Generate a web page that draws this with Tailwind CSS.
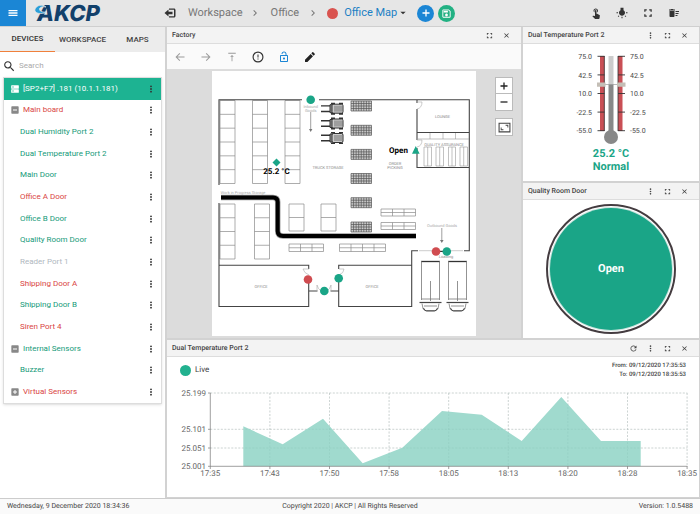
<!DOCTYPE html>
<html lang="en">
<head>
    <meta charset="utf-8" />
    <title>AKCP - Office Map</title>
    <meta name="viewport" content="width=device-width, initial-scale=1.0">
    <script src="https://cdn.jsdelivr.net/npm/@tailwindcss/browser@4"></script>
</head>
<body class="flex h-screen flex-col overflow-hidden bg-white font-['Roboto',sans-serif] text-[8px] text-[#444] [text-rendering:geometricPrecision]">
    <!-- icon sprite -->
    <svg class="hidden" xmlns="http://www.w3.org/2000/svg">
        <symbol id="i-menu" viewBox="0 0 24 24"><path d="M3 18h18v-2.500H3zm0-4.700h18v-2.600H3zM3 6v2.500h18V6z"/></symbol>
        <symbol id="i-exit" viewBox="0 0 24 24"><path d="M10 3h10c1.700 0 3 1.300 3 3v12c0 1.700-1.300 3-3 3H10v-2.500h10V5.500H10z"/><path d="M1 12l8-7v4.500h8v5H9V19z"/></symbol>
        <symbol id="i-chevron" viewBox="0 0 24 24"><path d="M8.600 16.600L13.200 12 8.600 7.400 10 6l6 6-6 6z"/></symbol>
        <symbol id="i-caret" viewBox="0 0 24 24"><path d="M4 8l8 8 8-8z"/></symbol>
        <symbol id="i-plus" viewBox="0 0 24 24"><path d="M19 13.300h-5.700V19h-2.600v-5.700H5v-2.600h5.700V5h2.600v5.700H19z"/></symbol>
        <symbol id="i-minus" viewBox="0 0 24 24"><path d="M5 10.700h14v2.600H5z"/></symbol>
        <symbol id="i-save" viewBox="0 0 24 24"><path d="M17 3H5c-1.110 0-2 .9-2 2v14c0 1.100.89 2 2 2h14c1.100 0 2-.9 2-2V7l-4-4zm2 16H5V5h11.200L19 7.800zM12 12c-1.660 0-3 1.340-3 3s1.340 3 3 3 3-1.340 3-3-1.340-3-3-3zM6 6h9v4H6z"/></symbol>
        <symbol id="i-touch" viewBox="0 0 24 24"><path d="M9 11.240V7.500C9 6.120 10.120 5 11.500 5S14 6.120 14 7.500v3.740c1.210-.81 2-2.180 2-3.740C16 5.010 13.990 3 11.500 3S7 5.010 7 7.500c0 1.560.79 2.930 2 3.740zm9.840 4.630l-4.540-2.260c-.17-.07-.35-.11-.54-.11H13v-6c0-.83-.67-1.500-1.500-1.500S10 6.670 10 7.500v10.740l-3.430-.72c-.08-.01-.15-.03-.24-.03-.31 0-.59.13-.79.33l-.79.8 4.940 4.940c.27.27.65.44 1.060.44h6.790c.75 0 1.330-.55 1.440-1.280l.75-5.270c.01-.07.02-.14.02-.2 0-.62-.38-1.160-.91-1.380z"/></symbol>
        <symbol id="i-light" viewBox="0 0 24 24"><path d="M3.550 18.540l1.410 1.410 1.800-1.790-1.410-1.410-1.800 1.790zM11 22.450h2V19.500h-2v2.950zM4 10.500H1v2h3v-2zm11-4.190V1.500H9v4.810C7.210 7.350 6 9.280 6 11.500c0 3.310 2.690 6 6 6s6-2.690 6-6c0-2.220-1.210-4.150-3-5.190zm5 4.190v2h3v-2h-3zm-2.760 7.660l1.790 1.800 1.410-1.410-1.800-1.790-1.400 1.400z"/></symbol>
        <symbol id="i-full" viewBox="0 0 24 24"><path d="M6 15H3v6h6v-3H6zM3 9h3V6h3V3H3zm15 9h-3v3h6v-6h-3zM15 3v3h3v3h3V3z"/></symbol>
        <symbol id="i-sweep" viewBox="0 0 24 24"><path d="M15 16h4v2h-4zm0-8h7v2h-7zm0 4h6v2h-6zM3 18c0 1.100.9 2 2 2h6c1.100 0 2-.9 2-2V8H3v10zM14 5h-3l-1-1H6L5 5H2v2h12z"/></symbol>
        <symbol id="i-close" viewBox="0 0 24 24"><path d="M20 5.800L18.200 4 12 10.200 5.800 4 4 5.800l6.200 6.200L4 18.200 5.800 20l6.200-6.200 6.200 6.200 1.800-1.800-6.200-6.200z"/></symbol>
        <symbol id="i-dots" viewBox="0 0 24 24"><circle cx="12" cy="4" r="2.800"/><circle cx="12" cy="12" r="2.800"/><circle cx="12" cy="20" r="2.800"/></symbol>
        <symbol id="i-refresh" viewBox="0 0 24 24"><path d="M17.650 6.350C16.200 4.900 14.210 4 12 4c-4.420 0-7.990 3.580-7.990 8s3.570 8 7.990 8c3.730 0 6.840-2.550 7.730-6h-2.080c-.82 2.330-3.040 4-5.650 4-3.310 0-6-2.690-6-6s2.690-6 6-6c1.660 0 3.140.69 4.220 1.780L13 11h7V4l-2.350 2.350z"/></symbol>
        <symbol id="i-search" viewBox="1 1 21 21"><path d="M15.500 14h-.79l-.28-.27C15.410 12.590 16 11.110 16 9.500 16 5.910 13.090 3 9.500 3S3 5.910 3 9.500 5.910 16 9.500 16c1.610 0 3.090-.59 4.230-1.570l.27.28v.79l5 4.990L20.490 19l-4.990-5zm-6 0C7.010 14 5 11.990 5 9.500S7.010 5 9.500 5 14 7.010 14 9.500 11.990 14 9.500 14z"/></symbol>
        <symbol id="i-dns" viewBox="0 0 24 24"><path fill-rule="evenodd" d="M2 1h20a1.500 1.500 0 011.500 1.500v7A1.500 1.500 0 0122 11H2a1.500 1.500 0 01-1.500-1.500v-7A1.500 1.500 0 012 1zm2 3.500v3h4v-3zM2 13h20a1.500 1.500 0 011.500 1.500v7A1.500 1.500 0 0122 23H2a1.500 1.500 0 01-1.500-1.500v-7A1.500 1.500 0 012 13zm2 3.500v3h4v-3z"/></symbol>
        <symbol id="i-collapse" viewBox="0 0 24 24"><path fill-rule="evenodd" d="M3 1h18a2 2 0 012 2v18a2 2 0 01-2 2H3a2 2 0 01-2-2V3a2 2 0 012-2zm3 9.500v3h12v-3z"/></symbol>
        <symbol id="i-expand" viewBox="0 0 24 24"><path fill-rule="evenodd" d="M3 1h18a2 2 0 012 2v18a2 2 0 01-2 2H3a2 2 0 01-2-2V3a2 2 0 012-2zm7.500 5v4.500H6v3h4.500V18h3v-4.500H18v-3h-4.500V6z"/></symbol>
        <symbol id="i-back" viewBox="0 0 24 24"><path d="M21 11H6.800l5.600-5.600L11 4l-8 8 8 8 1.400-1.400L6.800 13H21z"/></symbol>
        <symbol id="i-forward" viewBox="0 0 24 24"><path d="M3 11h14.200l-5.600-5.600L13 4l8 8-8 8-1.400-1.400 5.600-5.600H3z"/></symbol>
        <symbol id="i-top" viewBox="0 0 24 24"><path d="M7.500 11.500H11V22h2V11.500h3.500L12 7zM3 2v2h18V2z"/></symbol>
        <symbol id="i-alert" viewBox="0 0 24 24"><path d="M11 15h2v2.200h-2zm0-8.200h2V13h-2zM12 1a11 11 0 100 22 11 11 0 000-22zm0 19.700a8.700 8.700 0 110-17.400 8.700 8.700 0 010 17.400z"/></symbol>
        <symbol id="i-lock" viewBox="0 0 24 24"><path d="M12 17c1.100 0 2-.9 2-2s-.9-2-2-2-2 .9-2 2 .9 2 2 2zm6-9h-1V6c0-2.760-2.240-5-5-5S7 3.240 7 6h1.900c0-1.710 1.390-3.100 3.100-3.100 1.710 0 3.100 1.390 3.100 3.100v2H6c-1.100 0-2 .9-2 2v10c0 1.100.9 2 2 2h12c1.100 0 2-.9 2-2V10c0-1.100-.9-2-2-2zm0 12H6V10h12v10z"/></symbol>
        <symbol id="i-edit" viewBox="0 0 24 24"><path d="M2 17.250V22h4.750L18 10.700 13.300 6 2 17.250zM21.500 7.200c.5-.5.5-1.200 0-1.700l-3-3c-.5-.5-1.200-.5-1.700 0l-2.200 2.200 4.700 4.700z"/></symbol>
        <symbol id="i-fit" viewBox="0 0 24 24"><path fill-rule="evenodd" d="M1 3h22v18H1zm2 2v14h18V5zM14 7h5v5h-1.600V8.600H14zM5 12h1.600v3.400H10V17H5z"/></symbol>
    </svg>

    <header class="flex h-[27px] shrink-0 items-center border-b border-[#cfcfcf] bg-[#e6e6e6]">
        <button aria-label="Menu" class="flex h-full w-[26px] items-center justify-center bg-[#1b86d5] text-white"><svg class="size-3 fill-current"><use href="#i-menu"/></svg></button>
        <svg class="ml-2 h-6 w-20" viewBox="0 0 80 24" aria-label="AKCP">
            <text x="3" y="20" class="fill-[#12406b] font-['Inter',sans-serif] text-[22px] font-extrabold italic">AKCP</text>
            <path d="M1 8C3 4 8 3 12 6c-3-.500-5-.500-6.500 1.500C5 10 8 11.500 13 11 7 14 0 12.500 1 8z" fill="#2b9fd8" stroke="#e6e6e6" stroke-width=".7"/>
        </svg>
        <nav class="ml-[50px] flex flex-1 items-center text-[11px] text-[#777]">
            <button aria-label="Exit" class="mr-3 text-[#333]"><svg class="size-3 fill-current"><use href="#i-exit"/></svg></button>
            <a href="#">Workspace</a>
            <svg class="mx-1.5 size-3 fill-current"><use href="#i-chevron"/></svg>
            <a href="#" class="ml-1">Office</a>
            <svg class="mx-2 size-3 fill-current"><use href="#i-chevron"/></svg>
            <span class="mr-1.5 size-[11px] rounded-full bg-[#d9534f]"></span>
            <button class="flex items-center gap-0.5 text-[#1b80c4]">Office Map <svg class="size-2 fill-[#333]"><use href="#i-caret"/></svg></button>
            <button aria-label="Add" class="ml-2.5 flex size-[17px] items-center justify-center rounded-full bg-[#1b86d5] text-white"><svg class="size-3 fill-current"><use href="#i-plus"/></svg></button>
            <button aria-label="Save" class="ml-1 flex size-[17px] items-center justify-center rounded-full bg-[#22b183] text-white"><svg class="size-[11px] fill-current"><use href="#i-save"/></svg></button>
        </nav>
        <div class="flex gap-3.5 pr-5 text-[#333]">
            <button aria-label="Touch"><svg class="size-3 fill-current"><use href="#i-touch"/></svg></button>
            <button aria-label="Light"><svg class="size-3 fill-current"><use href="#i-light"/></svg></button>
            <button aria-label="Fullscreen"><svg class="size-3 fill-current p-px"><use href="#i-full"/></svg></button>
            <button aria-label="Clear"><svg class="size-3 fill-current"><use href="#i-sweep"/></svg></button>
        </div>
    </header>

    <div class="flex min-h-0 flex-1">
        <aside class="w-[165px] shrink-0">
            <div class="grid h-[25px] grid-cols-3 bg-[#ececec] font-medium">
                <button class="border-b border-[#f0803c] text-[#333]">DEVICES</button>
                <button class="text-[#444]">WORKSPACE</button>
                <button class="text-[#444]">MAPS</button>
            </div>
            <label class="flex h-[25px] items-center gap-1 px-[3px] pt-0.5">
                <svg class="size-3 shrink-0 fill-[#333]"><use href="#i-search"/></svg>
                <input type="text" aria-label="Search" placeholder="Search" class="w-full outline-none placeholder:text-[#aaa]">
            </label>
            <ul id="tree" class="mx-[3px] grid h-[327px] auto-rows-fr border border-[#ddd] shadow-sm"></ul>
        </aside>

        <main class="grid min-w-0 flex-1 grid-cols-[354fr_176fr] grid-rows-[311fr_157fr] gap-0.5 bg-[#d2d2d2] pr-px pb-px pl-0.5">
            <section class="flex min-h-0 flex-col bg-white">
                <div data-tools="full close" class="flex h-[17px] shrink-0 items-center border-b border-[#ddd] bg-[#f3f3f3] pr-2.5 pl-[5px]"><h2 class="flex-1 text-[7px] font-medium">Factory</h2></div>
                <div class="flex h-[26px] shrink-0 items-center gap-3.5 border-b border-[#ddd] bg-[#fafafa] px-[7px] text-[#999]">
                    <button aria-label="Back"><svg class="size-3 fill-current"><use href="#i-back"/></svg></button>
                    <button aria-label="Forward"><svg class="size-3 fill-current"><use href="#i-forward"/></svg></button>
                    <button aria-label="Up"><svg class="size-3 fill-current p-px"><use href="#i-top"/></svg></button>
                    <button aria-label="Alerts" class="text-[#333]"><svg class="size-3 fill-current"><use href="#i-alert"/></svg></button>
                    <button aria-label="Lock" class="text-[#1b86d5]"><svg class="size-3 fill-current"><use href="#i-lock"/></svg></button>
                    <button aria-label="Edit" class="text-[#222]"><svg class="size-3 fill-current"><use href="#i-edit"/></svg></button>
                </div>
                <div class="relative flex min-h-0 flex-1 justify-center bg-[#dcdcdc] pt-px pb-0.5">
                    <svg id="plan" class="h-full bg-white" viewBox="212 71 264 265" fill="none">
                        <g id="shelves" stroke="#8a8a8a" stroke-width=".7"></g>
                        <g id="racks"></g>
                        <!-- conveyor -->
                        <path d="M221 197.500H273Q277.700 197.500 277.700 202V231Q277.700 236 283 236H416" stroke="#999" stroke-width="5.500"/>
                        <path d="M221 197.500H273Q277.700 197.500 277.700 202V231Q277.700 236 283 236H416" stroke="#000" stroke-width="4"/>
                        <!-- walls -->
                        <path stroke="#444" stroke-width="1.100" d="M302 99.700H219V185M219 203V306.500H308.700V281M219 265.300H308.700V269M319 99.700H469.300V250.700H464M417 100V103M417 109V140M417 132.500H469M417 148V167.500H469M308.700 291H317.500M330.500 291H338.700M338.700 281V306.500H411.700V250.700H418M338.700 269V265.300H411.700"/>
                        <path stroke="#aaa" stroke-width=".6" d="M417 102h5q0 6-5 7M417 140h5q0 6-5 7M309 269h-6q1 4 6 6M339 269h5q0 4-5 6M317 285q1 4 4 6M331 285q-1 4-4 6M317 291v-6M331 291v-6M419 250.700H463"/>
                        <!-- quality room benches -->
                        <path stroke="#999" stroke-width=".6" d="M417 139H469M430 133v6M443 133v6M455.500 133v6M424 147h7.500v19H424zM427.700 147v19M436 147h7.500v19H436zM439.700 147v19M448.500 147h7v19h-7zM452 147v19M460 147h7.500v19H460zM463.700 147v19"/>
                        <path stroke="#777" stroke-width=".7" d="M310.700 112V130M441.800 228V241"/>
                        <path fill="#777" d="M309 129h3.400l-1.700 3zM440 240h3.600l-1.800 3z"/>
                        <g id="forklifts" stroke="#333" stroke-width="1"></g>
                        <g id="trucks" stroke="#777" stroke-width=".8"></g>
                        <g class="fill-[#888] text-[4px]" text-anchor="middle">
                            <text x="442.500" y="118">LOUNGE</text>
                            <text x="444" y="145.500">QUALITY ASSURANCE</text>
                            <text x="395" y="165">ORDER</text>
                            <text x="395" y="169">PICKING</text>
                            <text x="328" y="168.500">TRUCK STORAGE</text>
                            <text x="261" y="287.500">OFFICE</text>
                            <text x="372" y="287.500">OFFICE</text>
                            <text x="446" y="258">Loading</text>
                        </g>
                        <g class="fill-[#aaa] text-[4px]" text-anchor="middle">
                            <text x="310.700" y="107.500">Inbound</text>
                            <text x="310.700" y="111.500">Goods</text>
                            <text x="243" y="193.500">Work in Progress Storage</text>
                            <text x="442" y="227">Outbound Goods</text>
                        </g>
                        <!-- sensors -->
                        <g fill="#1aa587">
                            <circle cx="310.700" cy="99.700" r="4.300"/><circle cx="324.300" cy="291" r="4.300"/><circle cx="338.700" cy="278.300" r="4.300"/>
                            <path d="M276.500 158.500l4 4-4 4-4-4zM415.800 146l3.800 7.800H412z"/>
                        </g>
                        <path stroke="#333" stroke-width="1" d="M436 251.500h11"/>
                        <circle cx="446.800" cy="251.500" r="4.300" fill="#1aa587"/>
                        <g fill="#d04c50"><circle cx="308" cy="279.500" r="4.300"/><circle cx="436" cy="251.500" r="4.300"/></g>
                        <g class="fill-black text-[8px] font-bold" text-anchor="middle"><text x="276.500" y="174">25.2 °C</text><text x="398.500" y="153">Open</text></g>
                    </svg>
                    <div class="absolute top-[7px] right-2 flex flex-col gap-[7px] text-[#222]">
                        <div class="divide-y divide-[#bbb] border border-[#bbb] bg-white">
                            <button aria-label="Zoom in" class="flex size-4 items-center justify-center"><svg class="size-3 fill-current"><use href="#i-plus"/></svg></button>
                            <button aria-label="Zoom out" class="flex size-4 items-center justify-center"><svg class="size-3 fill-current"><use href="#i-minus"/></svg></button>
                        </div>
                        <button aria-label="Fit" class="flex h-[18px] items-center justify-center border border-[#bbb] bg-white"><svg class="size-[13px] fill-[#444]"><use href="#i-fit"/></svg></button>
                    </div>
                </div>
            </section>

            <div class="grid min-h-0 grid-rows-[154fr_155fr] gap-0.5">
                <section class="flex min-h-0 flex-col bg-white">
                    <div data-tools="dots full close" class="flex h-[17px] shrink-0 items-center border-b border-[#ddd] bg-[#f3f3f3] pr-2.5 pl-[5px]"><h2 class="flex-1 text-[7px] font-medium">Dual Temperature Port 2</h2></div>
                    <svg id="thermo" class="min-h-0 w-full flex-1" viewBox="523 44 176 137">
                        <path fill="#c94f55" d="M600 56h4.500v75H600zM618 56h4.500v75H618z"/>
                        <path stroke="#333" stroke-width=".8" d="M604.300 56v75M618 56v75"/>
                        <path fill="#ccc" d="M608.500 56h5v29h-5z"/>
                        <path fill="#888" d="M608.500 84.500h5V132h-5z"/>
                        <circle cx="611" cy="137" r="7" fill="#888"/>
                        <path stroke="#999" stroke-width=".7" d="M600 84.500h22"/>
                        <path fill="#c4beb6" d="M597 82.500h8.500v4.200H597zM617 82.500h8.500v4.200H617z"/>
                        <g class="fill-[#1aa587] text-[11px] font-bold" text-anchor="middle"><text x="611" y="157">25.2 °C</text><text x="611" y="170">Normal</text></g>
                    </svg>
                </section>
                <section class="flex min-h-0 flex-col bg-white">
                    <div data-tools="dots full close" class="flex h-[17px] shrink-0 items-center border-b border-[#ddd] bg-[#f3f3f3] pr-2.5 pl-[5px]"><h2 class="flex-1 text-[7px] font-medium">Quality Room Door</h2></div>
                    <div class="flex min-h-0 flex-1 items-center justify-center p-1">
                        <div class="flex aspect-square h-full items-center justify-center rounded-full border-2 border-[#443c40] p-0.5">
                            <div class="flex size-full items-center justify-center rounded-full bg-[#1aa587] text-[11px] font-bold text-white ring-1 ring-[#cde5df]">Open</div>
                        </div>
                    </div>
                </section>
            </div>

            <section class="col-span-2 flex min-h-0 flex-col bg-white">
                <div data-tools="refresh dots full close" class="flex h-[17px] shrink-0 items-center border-b border-[#ddd] bg-[#f3f3f3] pr-2.5 pl-[5px]"><h2 class="flex-1 text-[7px] font-medium">Dual Temperature Port 2</h2></div>
                <div class="flex h-6 shrink-0 items-center justify-between px-[13px] pt-0.5">
                    <span class="flex items-center gap-1"><i class="size-[11px] rounded-full bg-[#22b18f]"></i>Live</span>
                    <p class="text-right text-[6px] leading-[9px] font-medium">From: 09/12/2020 17:35:53<br>To: 09/12/2020 18:35:53</p>
                </div>
                <svg id="chart" class="min-h-0 w-full flex-1" viewBox="167 381 532 116">
                    <g id="grid" stroke="#d4d4d4" stroke-width=".8" stroke-dasharray="2 1.500"></g>
                    <path fill="#a0dace" d="M243.300 466.300V426.300L282.700 444.300 323 418.700 362.700 463.300 402.300 447.700 442 411 481.700 414.700 521.700 441 561.300 397 601 441H640.700V466.300z"/>
                    <path id="gridover" fill="none" stroke="#5a9a90" stroke-opacity=".15" stroke-width=".8" stroke-dasharray="2 1.500"/>
                    <path id="axis" stroke="#888" stroke-width=".8" fill="none"/>
                    <g id="labels" class="fill-[#666] text-[8px]"></g>
                </svg>
            </section>
        </main>
    </div>

    <footer class="grid h-4 shrink-0 grid-cols-3 items-center border-t border-[#ccc] bg-[#fafafa] px-[7px] text-[7px]">
        <span>Wednesday, 9 December 2020 18:34:36</span>
        <span class="text-center">Copyright 2020 | AKCP | All Rights Reserved</span>
        <span class="text-right">Version: 1.0.5488</span>
    </footer>

    <script>
        const $ = (s) => document.querySelector(s);

        // device tree: [label, colour, icon]
        const green = 'text-[#159a79]', red = 'text-[#d9453f]', grey = 'text-[#b0b8c0]';
        const devices = [
            ['[SP2+F7] .181 (10.1.1.181)', 'bg-[#1db392] text-white', 'dns'],
            ['Main board', red, 'collapse'],
            ['Dual Humidity Port 2', green],
            ['Dual Temperature Port 2', green],
            ['Main Door', green],
            ['Office A Door', red],
            ['Office B Door', green],
            ['Quality Room Door', green],
            ['Reader Port 1', grey],
            ['Shipping Door A', red],
            ['Shipping Door B', green],
            ['Siren Port 4', red],
            ['Internal Sensors', green, 'collapse'],
            ['Buzzer', green],
            ['Virtual Sensors', red, 'expand'],
        ];
        $('#tree').innerHTML = devices.map(([label, colour, icon]) => {
            let mark = '';
            if (icon === 'dns') mark = '<svg class="size-2 fill-white"><use href="#i-dns"/></svg>';
            else if (icon) mark = '<svg class="size-2 fill-[#888]"><use href="#i-' + icon + '"/></svg>';
            return '<li class="flex items-center justify-between pr-1.5 ' + (icon ? 'pl-[7px] ' : 'pl-4 ') + colour + '">'
                + '<button class="flex items-center gap-1">' + mark + label + '</button>'
                + '<button aria-label="More" class="text-[#333]"><svg class="size-2 fill-current"><use href="#i-dots"/></svg></button></li>';
        }).join('');

        // panel buttons
        document.querySelectorAll('[data-tools]').forEach((bar) => {
            bar.insertAdjacentHTML('beforeend', '<div class="flex gap-2">' + bar.dataset.tools.split(' ').map((t) =>
                '<button aria-label="' + t + '" class="flex size-[9px] items-center justify-center"><svg class="' + (t === 'refresh' ? 'size-[9px]' : 'size-[7px]') + ' fill-[#444]"><use href="#i-' + t + '"/></svg></button>').join('') + '</div>');
        });

        // shelving: x, y, width, height, columns, rows
        const cells = (x, y, w, h, cols, rows) => {
            let d = 'M' + x + ' ' + y + 'h' + w + 'v' + h + 'h' + -w + 'z';
            for (let i = 1; i < cols; i++) d += 'M' + (x + w * i / cols) + ' ' + y + 'v' + h;
            for (let i = 1; i < rows; i++) d += 'M' + x + ' ' + (y + h * i / rows) + 'h' + w;
            return '<path d="' + d + '"/>';
        };
        $('#shelves').innerHTML = [
            [220, 100.5, 15, 83, 1, 6], [252.5, 100.5, 15, 83, 1, 6], [285, 100.5, 15, 83, 1, 6],
            [220, 204, 15, 55, 1, 4], [254.5, 204, 15, 55, 1, 4], [289, 204, 15, 27, 1, 2], [321, 204, 15, 27, 1, 2],
            [289, 244, 34.5, 7.5, 3, 2], [339.5, 244, 46, 7.5, 4, 2], [381, 209, 34.5, 7, 3, 2], [381, 222.5, 34.5, 7, 3, 2],
        ].map((s) => cells(...s)).join('');

        $('#racks').innerHTML = [101, 125.3, 149.4, 173.5, 197.7, 222].map((y) =>
            '<g fill="#ccc" stroke="#555" stroke-width=".7">' + cells(351, y, 20.5, 10, 8, 4) + '</g>').join('');

        $('#forklifts').innerHTML = [108.7, 123.5, 138].map((y) =>
            '<g transform="translate(321 ' + y + ')"><path d="M0-2.800h9M0 2.800h9" stroke-width="1.400"/><path d="M9-4h4v8H9z" fill="#999"/><rect x="11" y="-4.500" width="11" height="9" rx="1.500" fill="#ccc"/><path d="M14-3v6M16-3v6M18-3v6M20-3v6" stroke-width=".6"/><path d="M10-5.200h4M18-5.200h4M10 5.200h4M18 5.200h4" stroke-width="1.600"/></g>').join('');

        $('#trucks').innerHTML = [421, 448].map((x) =>
            '<g transform="translate(' + x + ' 261)"><path d="M0 .5h19" stroke="#333" stroke-width="1.300"/><path d="M.5 0v39M18.500 0v39M.5 38h18M9.500 20v20"/><path d="M-1.500 41.500h22" stroke="#444" stroke-width="1.200"/><path d="M1 42.500l1 5q1 2 3 2h9q2 0 3-2l1-5M3 45h13"/><path d="M2.500 47q1 3 3 3h8q2 0 3-3" stroke="#444" stroke-width="1"/></g>').join('');

        // thermometer scale
        const svgNs = 'http://www.w3.org/2000/svg';
        const scale = document.createElementNS(svgNs, 'g');
        scale.setAttribute('class', 'fill-[#444] text-[7px]');
        scale.innerHTML = ['75.0', '42.5', '10.0', '-22.5', '-55.0'].map((t, i) => {
            const y = 56.3 + i * 18.6;
            return '<path stroke="#333" stroke-width=".9" d="M597.500 ' + y + 'h7M618 ' + y + 'h7"/>'
                + '<text text-anchor="end" x="592" y="' + (y + 2.7) + '">' + t + '</text><text x="630" y="' + (y + 2.7) + '">' + t + '</text>';
        }).join('');
        $('#thermo').append(scale);

        // chart grid and axes
        const times = ['17:35', '17:43', '17:50', '17:58', '18:05', '18:13', '18:20', '18:28', '18:35'];
        const temps = [['25.199', 393], ['25.101', 429.3], ['25.051', 448], ['25.001', 466.3]];
        let grid = '', axis = 'M210.300 393V466.300H687.300', labels = '';
        times.forEach((t, i) => {
            const x = 210.3 + i * 59.6;
            if (i) grid += 'M' + x + ' 393V466';
            axis += 'M' + x + ' 466v3';
            labels += '<text text-anchor="middle" x="' + x + '" y="476">' + t + '</text>';
        });
        temps.forEach(([t, y], i) => {
            if (i < 3) grid += 'M210.300 ' + y + 'H687.300';
            axis += 'M208 ' + y + 'h2.500';
            labels += '<text text-anchor="end" x="206" y="' + (y + 2.8) + '">' + t + '</text>';
        });
        $('#grid').innerHTML = '<path d="' + grid + '"/>';
        $('#gridover').setAttribute('d', grid);
        $('#axis').setAttribute('d', axis);
        $('#labels').innerHTML = labels;
    </script>
</body>
</html>
